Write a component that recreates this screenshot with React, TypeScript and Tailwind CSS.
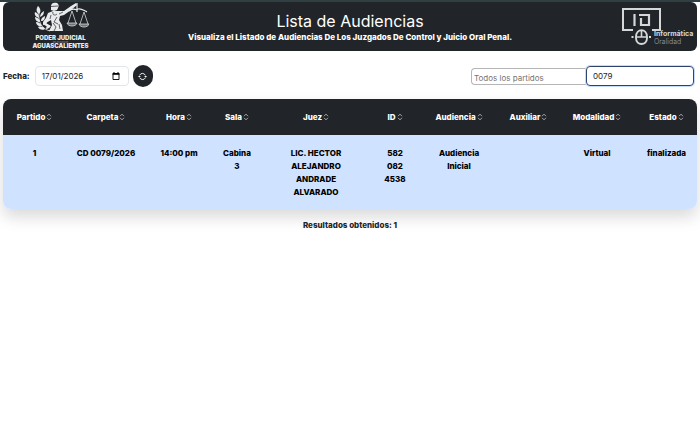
import React, { useState } from "react";

interface Hearing {
  partido: string;
  carpeta: string;
  hora: string;
  sala: string;
  juez: string;
  id: string;
  audiencia: string;
  auxiliar: string;
  modalidad: string;
  estado: string;
}

interface Column {
  key: keyof Hearing;
  title: string;
  width: string;
}

const COLUMNS: Column[] = [
  { key: "partido", title: "Partido", width: "w-[63px]" },
  { key: "carpeta", title: "Carpeta", width: "w-[80px]" },
  { key: "hora", title: "Hora", width: "w-[66px]" },
  { key: "sala", title: "Sala", width: "w-[50px]" },
  { key: "juez", title: "Juez", width: "w-[108px]" },
  { key: "id", title: "ID", width: "w-[50px]" },
  { key: "audiencia", title: "Audiencia", width: "w-[78px]" },
  { key: "auxiliar", title: "Auxiliar", width: "w-[61px]" },
  { key: "modalidad", title: "Modalidad", width: "w-[76px]" },
  { key: "estado", title: "Estado", width: "w-[63px]" },
];

const HEARINGS: Hearing[] = [
  {
    partido: "1",
    carpeta: "CD 0079/2026",
    hora: "14:00 pm",
    sala: "Cabina 3",
    juez: "LIC. HECTOR ALEJANDRO ANDRADE ALVARADO",
    id: "582 082 4538",
    audiencia: "Audiencia Inicial",
    auxiliar: "",
    modalidad: "Virtual",
    estado: "finalizada",
  },
];

const JusticeLogo = () => (
  <div className="flex w-[57px] flex-col items-center whitespace-nowrap text-[#e9eaeb]">
    <svg viewBox="0 0 56 31" className="h-[31px] w-14" fill="none" stroke="currentColor">
      {/* laurel branch */}
      <path d="M17 29C9 27 5 20 6 11" strokeWidth="0.8" />
      <g fill="currentColor" stroke="none">
        <path d="M6 12C3 10 3 7 5 4C8 7 8 10 6 12Z" />
        <path d="M6 16C3 15 1 13 2 10C5 11 6 13 6 16Z" />
        <path d="M7 20C4 20 2 18 2 15C5 16 7 17 7 20Z" />
        <path d="M9 24C6 25 3 23 3 20C6 20 8 22 9 24Z" />
        <path d="M12 27C9 29 6 27 5 25C8 24 11 25 12 27Z" />
        <path d="M7 15C7 12 9 10 11 9C11 12 10 14 7 15Z" />
        <path d="M8 19C8 16 10 15 12 14C12 17 11 19 8 19Z" />
        <path d="M10 23C10 20 12 19 14 19C14 21 13 23 10 23Z" />
        <path d="M13 27C13 24 15 23 17 23C17 25 16 27 13 27Z" />
      </g>
      {/* figure */}
      <g fill="currentColor" stroke="none">
        <path d="M18 4C18 1 21 0 24 1C26 2 26 4 25 6L24 8L21 9L18 8Z" />
        <path d="M15 11L20 9L25 9L31 9L38 4L43 1L44 3L38 8L31 13L27 14L26 18L29 23L30 29L16 29L19 23L18 18L13 21L18 24L16 26L10 22L10 20L13 16Z" />
      </g>
      <g stroke="#212529" strokeWidth="0.7">
        <path d="M18 4.500L25 4" />
        <path d="M20 10C19 13 22 14 24 12M18 13L17 17M24 15L21 20L25 22M20 21L23 25L21 29M26 22L27 27M30 10L26 12" />
      </g>
      {/* scales */}
      <path d="M44 1V10M36 9C40 5 43 9 45 7C48 6 50 8 54 10" strokeWidth="1.2" />
      <path d="M39 9L35 21M39 9L43 21M51 10L47 22M51 10L55 22" strokeWidth="0.7" />
      <path
        d="M34 21H44C43 25 35 25 34 21ZM46 22H56C55 26 47 26 46 22Z"
        strokeWidth="0.7"
        fill="currentColor"
        fillOpacity="0.4"
      />
    </svg>
    <span className="mt-px text-[6px] leading-[7px] font-black">PODER JUDICIAL</span>
    <span className="text-[2px] leading-[2px] text-gray-400">DEL ESTADO DE</span>
    <span className="text-[6px] leading-[6px] font-black">AGUASCALIENTES</span>
  </div>
);

const InformaticaLogo = () => (
  <div className="flex w-[72px] items-end text-[#d5d7d9]">
    <svg
      viewBox="0 0 42 40"
      className="-mr-[9px] h-10 w-[42px] shrink-0"
      fill="none"
      stroke="currentColor"
    >
      <path d="M12 23H2V2H39V23H31" strokeWidth="2" />
      <path d="M13.500 7V19" strokeWidth="2.200" />
      <path d="M18 8H28V18H20V11" strokeWidth="2.200" />
      {/* mouse */}
      <path d="M15 30C15 21 26 21 26 30V31C26 39 15 39 15 31Z" strokeWidth="1.900" />
      <path d="M15 30H26M20.500 24V30" strokeWidth="1.600" />
      <path d="M10.500 30H12.500M28 30H30" strokeWidth="1.800" />
    </svg>
    <div className="flex flex-col pb-px text-[7px] leading-[8px]">
      <span className="font-bold">Informática</span>
      <span className="font-light text-gray-400">Oralidad</span>
    </div>
  </div>
);

const SortIcon = () => (
  <svg viewBox="0 0 6 8" className="h-2 w-1.5" fill="none" stroke="currentColor" strokeWidth="0.6">
    <path d="M1 3.200L3 1.200L5 3.200M1 4.800L3 6.800L5 4.800" />
  </svg>
);

const App = () => {
  const [date, setDate] = useState("17/01/2026");
  const [district, setDistrict] = useState("");
  const [search, setSearch] = useState("0079");
  const [sortKey, setSortKey] = useState<keyof Hearing>("hora");

  const handleReset = () => {
    setDate("17/01/2026");
    setDistrict("");
    setSearch("");
  };

  const rows = HEARINGS.filter(
    (hearing) =>
      hearing.carpeta.includes(search) &&
      (district === "" || hearing.partido === district),
  ).sort((a, b) => a[sortKey].localeCompare(b[sortKey]));

  return (
    <div className="border-t-2 border-[#2f3f42] bg-white font-[Inter,sans-serif] text-[#212529]">
      <header className="mx-[3px] grid h-[49px] grid-cols-[1fr_auto_1fr] items-center rounded-md bg-[#212529] text-white">
        <div className="self-start pl-[29px]">
          <JusticeLogo />
        </div>
        <div className="text-center">
          <h1 className="text-base leading-5 font-normal">Lista de Audiencias</h1>
          <p className="text-[8px] leading-3 font-extrabold">
            Visualiza el Listado de Audiencias De Los Juzgados De Control y Juicio Oral Penal.
          </p>
        </div>
        <div className="flex justify-end pr-1">
          <InformaticaLogo />
        </div>
      </header>

      <div className="flex items-center justify-between px-[3px] pt-3.5 pb-3">
        <div className="flex items-center">
          <label htmlFor="date" className="mr-[5px] text-[8px] font-extrabold">
            Fecha:
          </label>
          <div className="flex h-5 w-[94px] items-center justify-between rounded border border-[#e3e6e9] pr-2 pl-1.5">
            <input
              id="date"
              type="text"
              value={date}
              onChange={(e) => setDate(e.target.value)}
              className="w-16 text-[8px] outline-hidden"
            />
            <button type="button" aria-label="Abrir calendario">
              <svg viewBox="0 0 8 8" className="size-2" fill="none" stroke="black">
                <path d="M1 1.500H7V7.500H1Z" strokeWidth="0.900" />
                <path d="M0.600 2H7.400" strokeWidth="1.600" />
                <path d="M2 0V1M6 0V1" strokeWidth="1" />
              </svg>
            </button>
          </div>
          <button
            type="button"
            aria-label="Actualizar"
            onClick={handleReset}
            className="ml-1 flex h-[22px] w-5 items-center justify-center rounded-full bg-[#212529] text-white"
          >
            <svg viewBox="0 0 16 16" className="size-[9px]" fill="currentColor">
              <path d="M11 7h5l-2.500 3zM0 9h5l-2.500 -3z" />
              <path
                d="M3 5.500A5.500 5.500 0 0 1 13 6M13 10.500A5.500 5.500 0 0 1 3 10"
                fill="none"
                stroke="currentColor"
                strokeWidth="1.600"
              />
            </svg>
          </button>
        </div>

        <div className="flex items-center pr-[3px]">
          <select
            aria-label="Partido"
            value={district}
            onChange={(e) => setDistrict(e.target.value)}
            className="h-[17px] w-[115px] appearance-none rounded-l-sm border border-r-0 border-[#b5b5b5] bg-white px-0.5 pt-[3px] text-[8px] leading-3 text-[#757575]"
          >
            <option value="">Todos los partidos</option>
            <option value="1">1</option>
          </select>
          <input
            type="text"
            aria-label="Buscar"
            autoFocus
            value={search}
            onChange={(e) => setSearch(e.target.value)}
            className="h-5 w-[108px] rounded border border-[#2f4470] px-1.5 text-[8px] ring-1 ring-[#c2dbfe] outline-hidden"
          />
        </div>
      </div>

      <div className="mx-[3px] overflow-hidden rounded-lg shadow-[0_8px_16px_rgba(0,0,0,0.15)]">
        <table className="w-full table-fixed text-center text-[8px] font-extrabold">
          <thead className="bg-[#212529] text-white">
            <tr className="h-9">
              {COLUMNS.map((column) => (
                <th key={column.key} scope="col" className={column.width}>
                  <button
                    type="button"
                    onClick={() => setSortKey(column.key)}
                    className="inline-flex items-center gap-px font-extrabold"
                  >
                    {column.title}
                    <SortIcon />
                  </button>
                </th>
              ))}
            </tr>
          </thead>
          <tbody className="bg-[#cfe2ff] text-black">
            {rows.map((row) => (
              <tr key={row.carpeta} className="align-top">
                {COLUMNS.map((column) => (
                  <td
                    key={column.key}
                    className={`pt-3 pb-2.5 leading-[13px] ${column.key === "juez" ? "px-5" : "px-[9px]"}`}
                  >
                    {row[column.key]}
                  </td>
                ))}
              </tr>
            ))}
          </tbody>
        </table>
      </div>

      <p className="mt-2 text-center text-[8px] leading-4 font-extrabold">
        Resultados obtenidos: {rows.length}
      </p>
    </div>
  );
};

export default App;
